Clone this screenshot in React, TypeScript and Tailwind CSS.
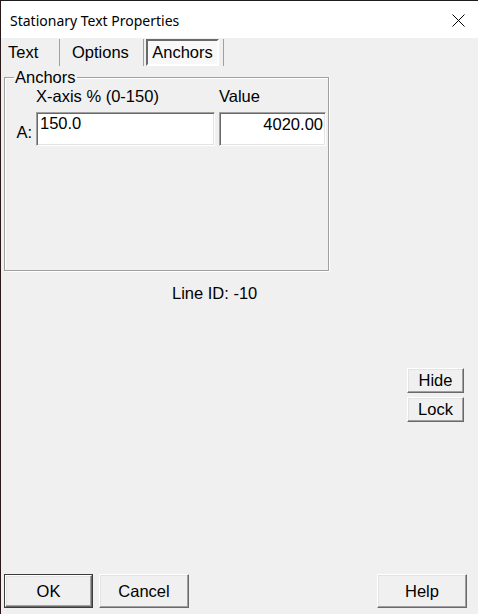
import React from "react";

const raised =
  "border border-t-white border-l-white border-b-[#696969] border-r-[#696969] shadow-[inset_-1px_-1px_0_#a0a0a0,inset_1px_1px_0_#e3e3e3] bg-[#f0f0f0]";

const sunken =
  "border border-t-[#a0a0a0] border-l-[#a0a0a0] border-b-white border-r-white shadow-[inset_1px_1px_0_#696969,inset_-1px_-1px_0_#e3e3e3] bg-white";

const Btn: React.FC<{ label: string; className?: string; isDefault?: boolean }> = ({
  label,
  className = "",
  isDefault,
}) => {
  if (isDefault) {
    return (
      <div className={`border border-[#3c3c3c] flex ${className}`}>
        <button className={`flex-1 flex items-center justify-center ${raised}`}>
          {label}
        </button>
      </div>
    );
  }
  return (
    <button className={`flex items-center justify-center ${raised} ${className}`}>
      {label}
    </button>
  );
};

const App: React.FC = () => {
  return (
    <div
      className="w-[478px] h-[614px] flex flex-col bg-[#f0f0f0] border-t border-l border-t-[#1c1c1c] border-l-[#2a1818] text-black text-[16.5px] overflow-hidden"
      style={{ fontFamily: '"Liberation Sans", Arial, sans-serif' }}
    >
      {/* title bar */}
      <div className="h-[37px] bg-white flex items-center justify-between pl-[9px] pr-[13px] pt-[2px]">
        <span
          className="text-[14px]"
          style={{ fontFamily: '"Noto Sans", sans-serif' }}
        >
          Stationary Text Properties
        </span>
        <svg width="13" height="13" viewBox="0 0 13 13" className="mt-[-1px]">
          <path d="M0.5 0.5 L12.5 12.5 M12.5 0.5 L0.5 12.5" stroke="#000" strokeWidth="1" />
        </svg>
      </div>

      {/* tabs */}
      <div className="h-[28px] flex items-stretch pl-[7px]">
        <div className="w-[52px] flex items-center border-r border-[#a0a0a0] mt-[1px]">Text</div>
        <div className="w-[84px] flex items-center pl-[12px] border-r border-[#a0a0a0] mt-[1px]">
          Options
        </div>
        <div className="ml-[2px] w-[73px] mt-[1px] flex items-center justify-center border-2 border-t-[#696969] border-l-[#696969] border-b-white border-r-white bg-[#f8f8f8]">
          Anchors
        </div>
        <div className="ml-[4px] w-px bg-[#a0a0a0] mt-[1px]" />
      </div>

      {/* group box */}
      <fieldset className="ml-[3px] mt-[2px] w-[325px] h-[203px] border border-[#a0a0a0] shadow-[inset_1px_1px_0_white,1px_1px_0_white]">
        <legend className="ml-[9px] px-[1px] leading-[19px]">Anchors</legend>
        <div className="grid grid-cols-[27px_179px_107px] gap-x-[4px] gap-y-[6px]">
          <div />
          <div className="leading-[19px]">X-axis % (0-150)</div>
          <div className="leading-[19px]">Value</div>
          <div className="flex justify-end items-center pt-[7px]">A:</div>
          <div className={`h-[34px] pl-[3px] pt-[1px] leading-[19px] ${sunken}`}>150.0</div>
          <div className={`h-[34px] pr-[2px] pt-[2px] leading-[19px] text-right ${sunken}`}>
            4020.00
          </div>
        </div>
      </fieldset>

      <div className="mt-[13px] pl-[171px] leading-[19px]">Line ID: -10</div>

      <div className="mt-[65px] self-end mr-[14px] flex flex-col gap-[4px]">
        <Btn label="Hide" className="w-[57px] h-[25px]" />
        <Btn label="Lock" className="w-[57px] h-[25px]" />
      </div>

      <div className="flex-1" />

      {/* bottom buttons */}
      <div className="flex items-center pl-[3px] pr-[11px] pb-[6px]">
        <Btn label="OK" isDefault className="w-[89px] h-[34px]" />
        <Btn label="Cancel" className="ml-[6px] w-[90px] h-[34px]" />
        <div className="flex-1" />
        <Btn label="Help" className="w-[90px] h-[34px]" />
      </div>
    </div>
  );
};

export default App;
